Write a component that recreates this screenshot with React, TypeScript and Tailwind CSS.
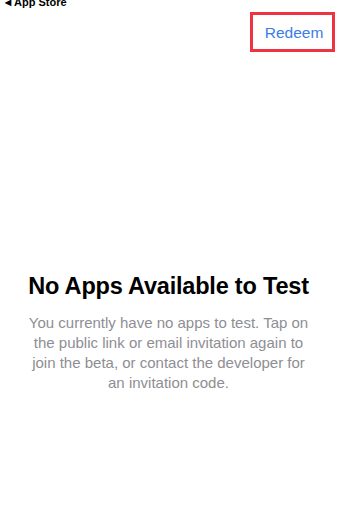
export default function App() {
  return (
    <div
      className="min-h-screen w-full bg-white text-black"
      style={{ fontFamily: '"Liberation Sans", Arial, sans-serif' }}
    >
      <div className="flex h-[12px] items-start overflow-hidden px-[5px]">
        <span className="-mt-[3px] flex items-center gap-[3px] text-[11px] font-semibold leading-[11px]">
          <span className="text-[8px]">◀</span>
          <span>App Store</span>
        </span>
      </div>

      <div className="flex justify-end pr-[2px]">
        <div className="flex h-[40px] w-[85px] items-center justify-center border-[3px] border-[#ef3340] pl-[3px] pt-[1px]">
          <span className="text-[15.5px] text-[#3a7ce8]">Redeem</span>
        </div>
      </div>

      <main className="flex flex-col items-center px-[10px] pt-[220px] text-center">
        <h1 className="text-[23.5px] font-bold leading-[28px] tracking-[-0.2px]">
          No Apps Available to Test
        </h1>
        <p className="mt-[13px] text-[15px] leading-[20px] text-[#8e8e93]">
          You currently have no apps to test. Tap on
          <br />
          the public link or email invitation again to
          <br />
          join the beta, or contact the developer for
          <br />
          an invitation code.
        </p>
      </main>
    </div>
  );
}
